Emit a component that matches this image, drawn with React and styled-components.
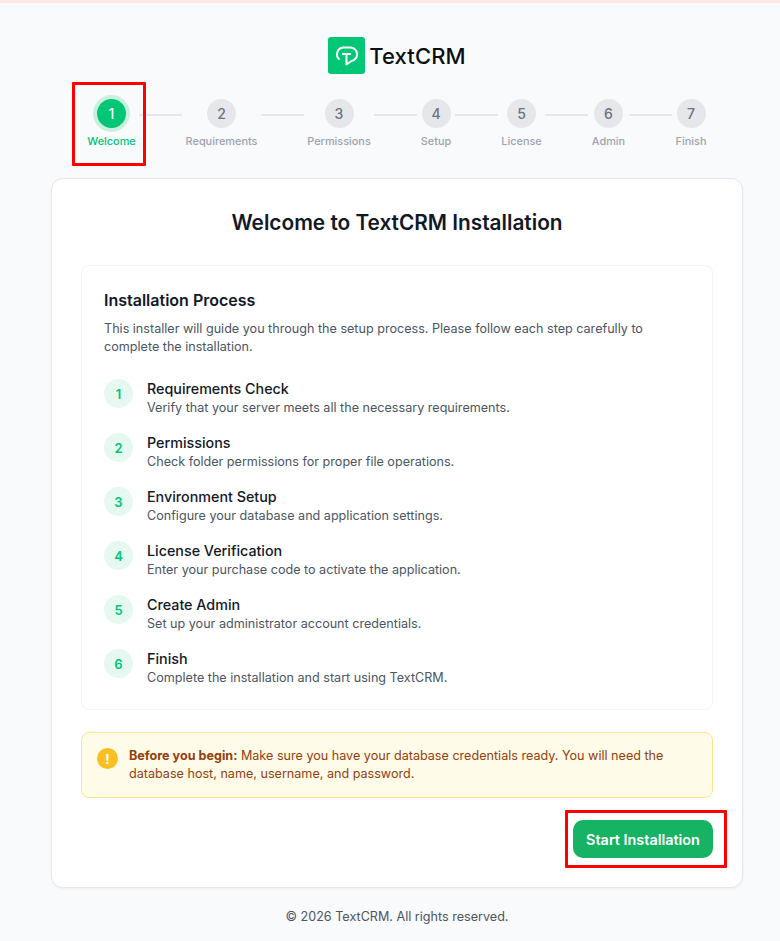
import React from 'react';
import styled, { createGlobalStyle } from 'styled-components';

const GlobalStyle = createGlobalStyle`
  html, body {
    margin: 0;
    padding: 0;
    background: #f9fafb;
    font-family: Inter, "Liberation Sans", sans-serif;
  }
  * { box-sizing: border-box; }
`;

const TopStrip = styled.div`
  height: 3px;
  background: #fde9e3;
`;

const Page = styled.div`
  width: 780px;
  height: 941px;
  overflow: hidden;
  padding: 34px 37px 0 51px;
  display: flex;
  flex-direction: column;
  align-items: stretch;
`;

const Brand = styled.div`
  display: flex;
  align-items: center;
  justify-content: center;
  gap: 4px;
  height: 37px;
`;

const BrandName = styled.span`
  font-size: 22px;
  font-weight: 500;
  color: #0b0f14;
  letter-spacing: 0.1px;
`;

const Stepper = styled.div`
  display: flex;
  align-items: flex-start;
  justify-content: center;
  margin-top: 25px;
  height: 79px;
`;

const Step = styled.div`
  position: relative;
  flex: none;
  display: flex;
  flex-direction: column;
  align-items: center;
  width: ${(p) => p.$width}px;
`;

const StepDot = styled.div`
  width: 29px;
  height: 29px;
  border-radius: 50%;
  display: flex;
  align-items: center;
  justify-content: center;
  font-size: 14px;
  font-weight: 500;
  background: ${(p) => (p.$active ? '#00c675' : '#e5e7eb')};
  color: ${(p) => (p.$active ? '#fff' : '#6b7280')};
  box-shadow: ${(p) => (p.$active ? '0 0 0 4px rgba(0, 198, 117, 0.2)' : 'none')};
`;

const StepLabel = styled.div`
  margin-top: 5px;
  font-size: 10.9px;
  line-height: 16px;
  font-weight: 500;
  white-space: nowrap;
  color: ${(p) => (p.$active ? '#00c675' : '#9ca3af')};
`;

const Connector = styled.div`
  flex: none;
  width: 43px;
  height: 2px;
  margin: 15px 3.5px 0;
  background: #e5e7eb;
`;

const Callout = styled.div`
  position: absolute;
  top: ${(p) => p.$top}px;
  left: ${(p) => p.$left}px;
  width: ${(p) => p.$w}px;
  height: ${(p) => p.$h}px;
  border: 3px solid #ff0000;
  border-radius: 1px;
  pointer-events: none;
`;

const Card = styled.main`
  width: 692px;
  height: 710px;
  padding: 29px 29px 0;
  background: #fff;
  border: 1px solid #e5e7eb;
  border-radius: 12px;
  box-shadow: 0 1px 3px rgba(0, 0, 0, 0.05);
`;

const Title = styled.h1`
  margin: 0;
  font-size: 20.8px;
  line-height: 29px;
  font-weight: 600;
  color: #111827;
  text-align: center;
`;

const ProcessBox = styled.section`
  height: 445px;
  margin-top: 28px;
  padding: 22px 22px 0;
  border: 1px solid #f3f4f6;
  border-radius: 8px;
`;

const BoxHeading = styled.h2`
  margin: 0;
  font-size: 16px;
  line-height: 24px;
  font-weight: 600;
  color: #111827;
`;

const BoxIntro = styled.p`
  margin: 8px 0 0;
  font-size: 12.6px;
  line-height: 18px;
  color: #4b5563;
`;

const StepList = styled.ol`
  list-style: none;
  margin: 23px 0 0;
  padding: 0;
  display: flex;
  flex-direction: column;
  gap: 14px;
`;

const StepRow = styled.li`
  display: flex;
  align-items: flex-start;
  gap: 14px;
  height: 40px;
`;

const RowNumber = styled.div`
  flex: none;
  width: 29px;
  height: 29px;
  border-radius: 50%;
  display: flex;
  align-items: center;
  justify-content: center;
  background: #e6f9f1;
  color: #00c675;
  font-size: 13px;
  font-weight: 600;
`;

const RowTitle = styled.div`
  font-size: 14.3px;
  line-height: 20px;
  font-weight: 500;
  color: #111827;
`;

const RowText = styled.div`
  font-size: 12.6px;
  line-height: 18px;
  color: #4b5563;
`;

const Notice = styled.aside`
  display: flex;
  align-items: flex-start;
  gap: 11px;
  height: 66px;
  margin-top: 22px;
  padding: 14px 15px 0;
  background: #fefce8;
  border: 1px solid #fde68a;
  border-radius: 8px;
`;

const NoticeIcon = styled.div`
  flex: none;
  width: 21px;
  height: 21px;
  margin-top: 1px;
  border-radius: 50%;
  display: flex;
  align-items: center;
  justify-content: center;
  background: #fbbf24;
  color: #fff;
  font-size: 13px;
  font-weight: 700;
`;

const NoticeText = styled.p`
  margin: 0;
  font-size: 12.6px;
  line-height: 18px;
  color: #92400e;
  strong { font-weight: 700; }
`;

const Actions = styled.div`
  display: flex;
  justify-content: flex-end;
  margin-top: 22px;
`;

const ButtonWrap = styled.div`
  position: relative;
`;

const PrimaryButton = styled.button`
  display: block;
  width: 140px;
  height: 38px;
  padding: 0;
  border: none;
  border-radius: 10px;
  background: #16b364;
  color: #fff;
  font-family: inherit;
  font-size: 14.4px;
  font-weight: 600;
  cursor: pointer;
`;

const Footer = styled.footer`
  margin-top: 20px;
  font-size: 12.6px;
  line-height: 18px;
  color: #4b5563;
  text-align: center;
  width: 692px;
`;

const steps = [
  { label: 'Welcome', width: 48 },
  { label: 'Requirements', width: 72 },
  { label: 'Permissions', width: 63 },
  { label: 'Setup', width: 31 },
  { label: 'License', width: 40 },
  { label: 'Admin', width: 34 },
  { label: 'Finish', width: 31 },
];

const process = [
  ['Requirements Check', 'Verify that your server meets all the necessary requirements.'],
  ['Permissions', 'Check folder permissions for proper file operations.'],
  ['Environment Setup', 'Configure your database and application settings.'],
  ['License Verification', 'Enter your purchase code to activate the application.'],
  ['Create Admin', 'Set up your administrator account credentials.'],
  ['Finish', 'Complete the installation and start using TextCRM.'],
];

const Logo = () => (
  <svg width="37" height="37" viewBox="0 0 37 37">
    <rect width="37" height="37" rx="3" fill="#00c675" />
    <path
      d="M11.5 22.5a6.8 6.8 0 0 1 3.5-12h7.5a6.8 6.8 0 0 1 1 13.5l-5 3.5v-4"
      fill="none"
      stroke="#fff"
      strokeWidth="2"
      strokeLinejoin="round"
    />
    <path d="M14 17h9M18.5 17v7" fill="none" stroke="#fff" strokeWidth="2" />
  </svg>
);

const App = () => (
  <>
    <GlobalStyle />
    <TopStrip />
    <Page>
      <Brand>
        <Logo />
        <BrandName>TextCRM</BrandName>
      </Brand>
      <Stepper>
        {steps.map((step, i) => (
          <React.Fragment key={step.label}>
            {i > 0 && <Connector />}
            <Step $width={step.width}>
              <StepDot $active={i === 0}>{i + 1}</StepDot>
              <StepLabel $active={i === 0}>{step.label}</StepLabel>
              {i === 0 && <Callout $top={-17} $left={-16} $w={74} $h={84} />}
            </Step>
          </React.Fragment>
        ))}
      </Stepper>
      <Card>
        <Title>Welcome to TextCRM Installation</Title>
        <ProcessBox>
          <BoxHeading>Installation Process</BoxHeading>
          <BoxIntro>
            This installer will guide you through the setup process. Please follow each step carefully to complete the installation.
          </BoxIntro>
          <StepList>
            {process.map(([title, text], i) => (
              <StepRow key={title}>
                <RowNumber>{i + 1}</RowNumber>
                <div>
                  <RowTitle>{title}</RowTitle>
                  <RowText>{text}</RowText>
                </div>
              </StepRow>
            ))}
          </StepList>
        </ProcessBox>
        <Notice>
          <NoticeIcon>!</NoticeIcon>
          <NoticeText>
            <strong>Before you begin:</strong> Make sure you have your database credentials ready. You will need the database host, name, username, and password.
          </NoticeText>
        </Notice>
        <Actions>
          <ButtonWrap>
            <PrimaryButton>Start Installation</PrimaryButton>
            <Callout $top={-10} $left={-8} $w={162} $h={58} />
          </ButtonWrap>
        </Actions>
      </Card>
      <Footer>© 2026 TextCRM. All rights reserved.</Footer>
    </Page>
  </>
);

export default App;
